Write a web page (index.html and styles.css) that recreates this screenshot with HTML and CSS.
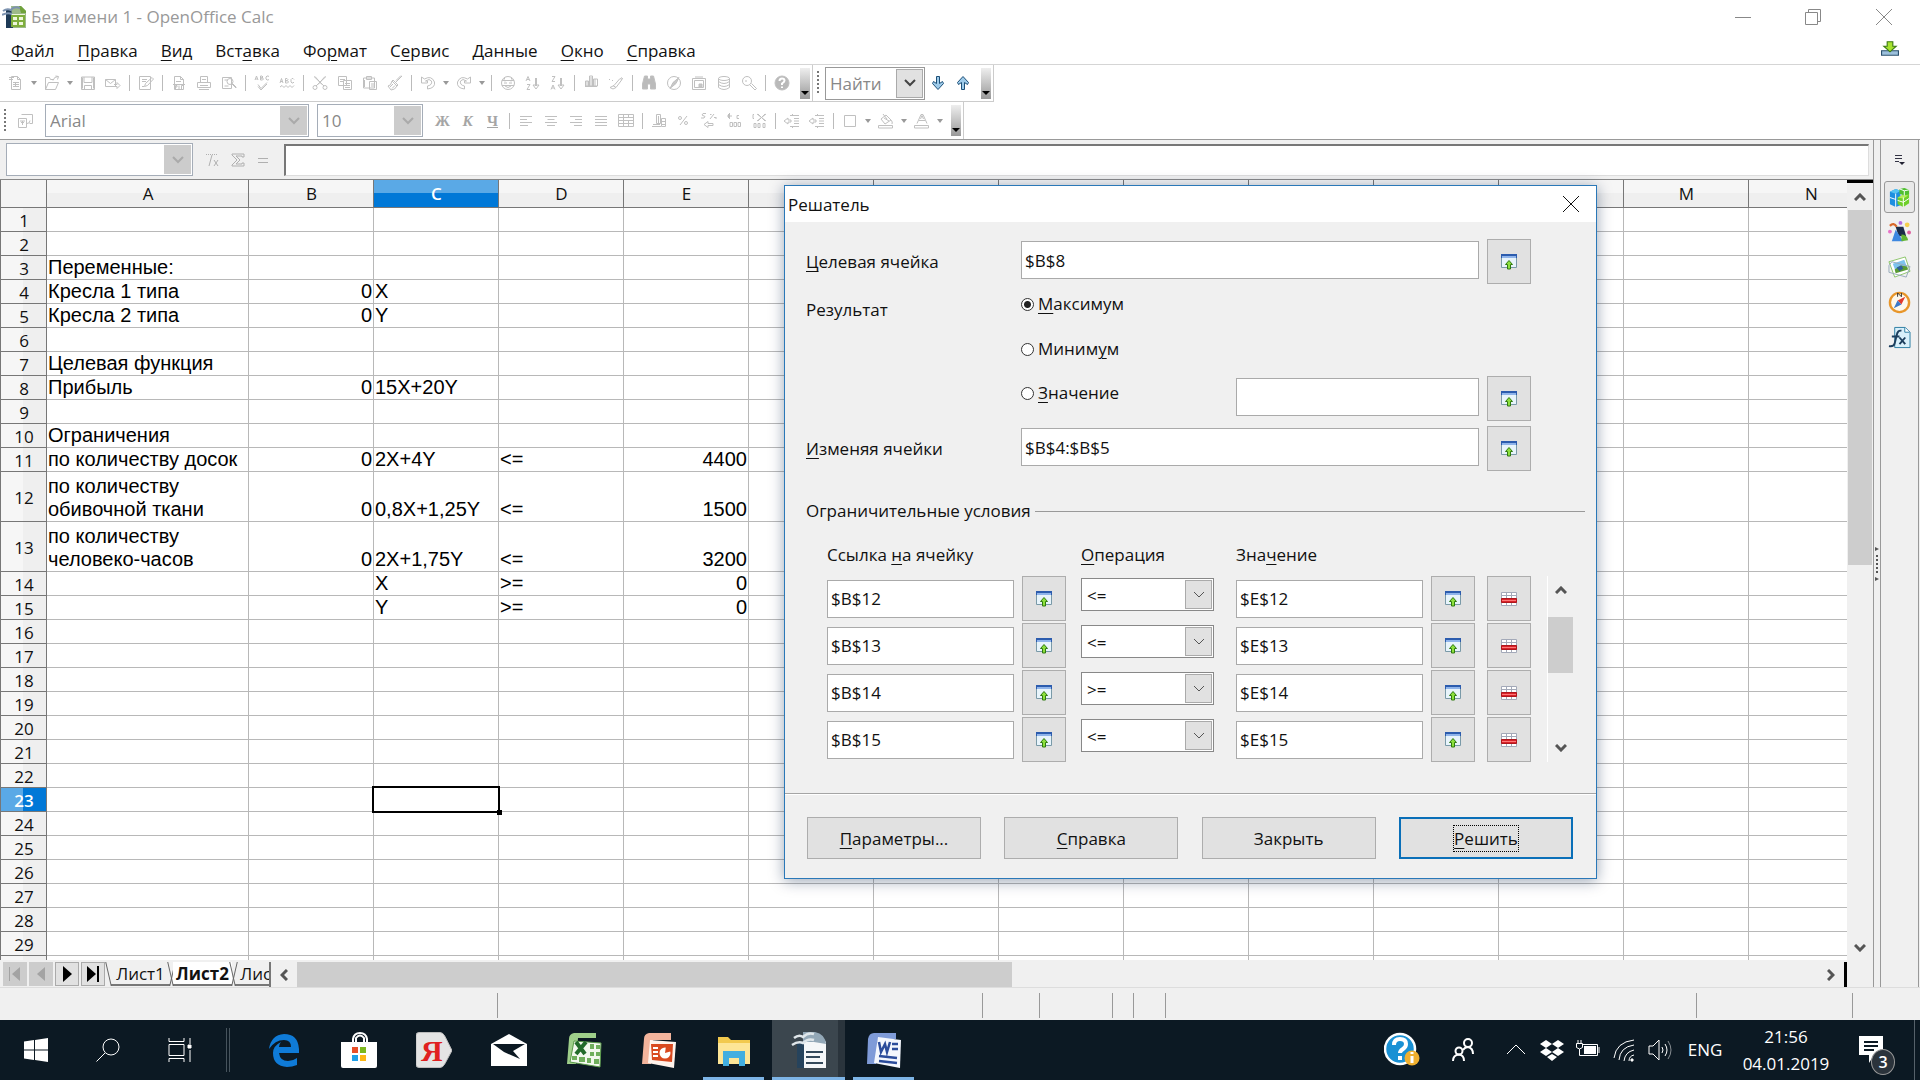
FILE: index.html
```html
<!DOCTYPE html>
<html lang="ru">
<head>
<meta charset="utf-8">
<title>Без имени 1 - OpenOffice Calc</title>
<link rel="stylesheet" href="styles.css">
</head>
<body>
<svg class="defs" aria-hidden="true">
  <symbol id="i-new" viewBox="0 0 16 16"><path d="M3.500 1.500h6l3 3v10h-9zM9.500 1.500v3h3M5 7.500h6M5 9.500h6M5 11.500h6M7.500 7v5"/><path d="M1 2.500h5M1 4.500h4"/></symbol>
  <symbol id="i-open" viewBox="0 0 16 16"><path d="M1.500 14.500v-12h4l1 2h3M1.500 14.500l3-7h10l-3 7zM9 5.500q1-4 5-4M11.500 1l3 .5-1 3"/></symbol>
  <symbol id="i-save" viewBox="0 0 16 16"><path d="M1.500 2h13v12.500h-13zM4 2v5.500h8v-5.500M4.500 14.500v-4h7v4M2.500 2.500v11M13.500 2.500v11"/></symbol>
  <symbol id="i-mail" viewBox="0 0 16 16"><path d="M.5 4.500h10v7h-10zM.5 4.500l5 4 5-4M9 9.500h3v-2l3 3-3 3v-2h-3"/></symbol>
  <symbol id="i-edit" viewBox="0 0 16 16"><path d="M1.500 1.500h11v13h-11zM4 4.500h5M4 6.500h4M6.500 11.500l1-3 6.500-6 1.500 1.500-6 6.500zM4 11.500h2"/></symbol>
  <symbol id="i-pdf" viewBox="0 0 16 16"><path d="M3.500 1.500h6l3 3v10h-9zM9.500 1.500v3h3M5 6.500h5M2 9.500h12M4.500 14v-3.500h1.500v1.500h-1.500M8 14v-3.500M10.500 14v-3.500h2"/></symbol>
  <symbol id="i-print" viewBox="0 0 16 16"><path d="M4.500 7v-5.500h7v5.500M1.500 7.500h13v5h-13zM3 14.500h10M4 10.500h8M6 4.500h4"/></symbol>
  <symbol id="i-preview" viewBox="0 0 16 16"><path d="M1.500 2.500h9v11h-9zM3.500 5h3M3.500 11h4"/><circle cx="9" cy="6.500" r="3"/><path d="M11 9l4 4M11.500 8.500l4 4"/></symbol>
  <symbol id="i-spell" viewBox="0 0 16 16"><path d="M1 5l1.500-4 1.500 4M1.500 4h2M6.500 1v4h2l1-1-1-1h-2 1.500l1-1-1-1zM15 1.500l-1-.5h-1l-1 1v2l1 1h1l1-.5M4 9.500l3 4 6-6M4 11.500l3 3.500 6-6"/></symbol>
  <symbol id="i-auto" viewBox="0 0 16 16"><path d="M1 8l1.500-4.500 1.500 4.500M1.500 6.500h2M6.500 3.500v4.500h2l1-1-1-1.300h-2 1.500l1-1-1-1.200zM15 4.500l-1-1h-1l-1 1v2.500l1 1h1l1-1M1 12l2-1.500 2 2 2-2 2 2 2-2 2 2 2-2"/></symbol>
  <symbol id="i-cut" viewBox="0 0 16 16"><path d="M2 1.500l10 9.500M14 1.500l-10 9.500M3 1.500l7 8M13 1.500l-7 8"/><circle cx="3" cy="12.500" r="2"/><circle cx="13" cy="12.500" r="2"/></symbol>
  <symbol id="i-copy" viewBox="0 0 16 16"><path d="M1.500 1.500h8v9h-8zM3 4.500h5M3 6.500h3M6.500 5.500h8v9h-8zM8 8.500h5M8 10.500h5M8 12.500h5"/></symbol>
  <symbol id="i-paste" viewBox="0 0 16 16"><path d="M1.500 3h11v10h-11zM4.500 1.500h5v3h-5zM7.500 6.500h7v8h-7zM9 9h4M9 11h4M2.500 5v7"/></symbol>
  <symbol id="i-brush" viewBox="0 0 16 16"><path d="M15 1l-6 6M14 .5l-5 5M5 6l5 5M6 5l5 5-1 1q-2 4-6 4l-3-4q3 0 4-5zM3 12l3-3M5 13.500l3-3"/></symbol>
  <symbol id="i-undo" viewBox="0 0 16 16"><path d="M1.500 2v6h6v-2h-2q4-3 6 0 1 4-4 5v3q8-1 7-7-3-7-10-3z"/></symbol>
  <symbol id="i-redo" viewBox="0 0 16 16"><path d="M14.500 2v6h-6v-2h2q-4-3-6 0-1 4 4 5v3q-8-1-7-7 3-7 10-3z"/></symbol>
  <symbol id="i-globe" viewBox="0 0 16 16"><circle cx="8" cy="8" r="6.500"/><path d="M2 5.500h12M2 10.500h12M4 8h3M9 8h3M5 2.500q-2 2 0 4M11 2.500q2 2 0 4M5 11q3 3 6 0"/></symbol>
  <symbol id="i-asc" viewBox="0 0 16 16"><path d="M1 6l2-4.500 2 4.500M2 4.500h2M2 9.500h3l-3 5h3M11.500 3v8M10.500 3v8M8 10h6l-3 4z"/></symbol>
  <symbol id="i-desc" viewBox="0 0 16 16"><path d="M2 1.500h3l-3 5h3M1 14.500l2-4.500 2 4.500M2 13h2M11.500 3v8M10.500 3v8M8 10h6l-3 4z"/></symbol>
  <symbol id="i-chart" viewBox="0 0 16 16"><path d="M2.500 11v-5h3v5zM6.500 11v-10h3v10zM10.500 11v-7h4v7zM8 2v9M4 6v5M2 11.500h12M12 4v7"/></symbol>
  <symbol id="i-draw" viewBox="0 0 16 16"><path d="M1 4l1 1M4 5l1 1M2 12.500q3 3 6 0l6-8-2-1-6 7zM5 10.500l3 2M13 2.500l2 1.500"/></symbol>
  <symbol id="i-binoc" viewBox="0 0 16 16"><path fill="#bbb" d="M3.500 1h3v3h3v-3h3l2 8v5h-5v-5h-3v5h-5v-5z"/></symbol>
  <symbol id="i-nav" viewBox="0 0 16 16"><circle cx="8" cy="8" r="6.500"/><path fill="#c8c8c8" d="M13 2.500l-3 6-6 5 3-6zM7 7l2 2"/></symbol>
  <symbol id="i-gallery" viewBox="0 0 16 16"><path d="M1.500 3.500h13v11h-13zM3.500 5.500h9v7h-9zM4 2h8"/><path fill="#c8c8c8" d="M8 9h3v3h-3z"/></symbol>
  <symbol id="i-db" viewBox="0 0 16 16"><ellipse cx="8" cy="3.500" rx="5.500" ry="2"/><path d="M2.500 3.500v9q5.500 4 11 0v-9M2.500 6.500q5.500 4 11 0M2.500 9.500q5.500 4 11 0"/></symbol>
  <symbol id="i-zoom" viewBox="0 0 16 16"><circle cx="6" cy="6" r="4.500"/><path d="M9 10l5 5 1.500-1.500-5-5M4 6h2"/></symbol>
  <symbol id="i-help" viewBox="0 0 16 16"><circle cx="8" cy="8" r="7" fill="#b9b9b9"/><path d="M5.500 6q0-2.500 2.500-2.500t2.500 2.200q0 1.300-2.500 2.800v1.500M8 11.500v1.500" style="stroke:#fff;stroke-width:2"/></symbol>
  <symbol id="i-styles" viewBox="0 0 16 16"><path d="M4.500 1.500h11v9h-3M1.500 5.500h8v9h-8zM3 8h5M5.500 8v4M4 9.500h3M10 10.500q3 0 3-3"/></symbol>
  <symbol id="i-left" viewBox="0 0 16 16"><path d="M2 3.500h12M2 6.500h7M2 9.500h12M2 12.500h8"/></symbol>
  <symbol id="i-center" viewBox="0 0 16 16"><path d="M2 3.500h12M4.500 6.500h7M2 9.500h12M4 12.500h8"/></symbol>
  <symbol id="i-right" viewBox="0 0 16 16"><path d="M2 3.500h12M7 6.500h7M2 9.500h12M6 12.500h8"/></symbol>
  <symbol id="i-just" viewBox="0 0 16 16"><path d="M2 3.500h12M2 6.500h12M2 9.500h12M2 12.500h12"/></symbol>
  <symbol id="i-merge" viewBox="0 0 16 16"><path d="M.5 1.500h15v12h-15zM.5 4.500h15M.5 7.500h15M.5 10.500h15M5.500 1.500v12M10.500 1.500v3M10.500 7.500v6"/></symbol>
  <symbol id="i-money" viewBox="0 0 16 16"><path d="M5.500 1.500h4v9h-4zM7.500 3v7M1 13.500h9M2 11.500h7M10.500 5.500h4v8h-4zM11 8.500h3M11 11.500h3"/></symbol>
  <symbol id="i-pct" viewBox="0 0 16 16"><circle cx="4" cy="5" r="1.500"/><circle cx="10" cy="10" r="1.500"/><path d="M11 3l-7 9"/></symbol>
  <symbol id="i-std" viewBox="0 0 16 16"><path d="M5 .5h-3l-1 1.500 3 1.500-1 1.500h-3M9 6l4-5M15 6v-2M9 1.500h1.500M13 4.500h2M3 11.500l4-3v2h5v2h-5v2z"/></symbol>
  <symbol id="i-dec" viewBox="0 0 16 16"><path d="M3.500 0v6M1 3h5M2.500 1v4M13 2.500h-2v3h2M4 9.500h2.500v4h-2.500zM8 9.500h2.500v4h-2.500zM12 9.500h2.500v4h-2.500z"/></symbol>
  <symbol id="i-del" viewBox="0 0 16 16"><path d="M3 1.500h-1v4h1M6 1l9 7M15 1l-9 7M7 1l7 7M14 1l-7 7M3 10.500h2v4h-2zM7 10.500h2v4h-2zM12 10.500h2v4h-2z"/></symbol>
  <symbol id="i-outdent" viewBox="0 0 16 16"><path d="M6 2.500h9M10 5.500h5M10 8h5M10 10.500h5M6 13.500h9M0 8l4-3v2h3v2h-3v2zM8.500 1v2M8.500 13v2"/></symbol>
  <symbol id="i-border" viewBox="0 0 16 16"><path d="M2.500 2.500h11v11h-11z"/></symbol>
  <symbol id="i-fill" viewBox="0 0 16 16"><path d="M3 6l5-4 5 5-6 4zM5 1l4 5M13 7q2 2 1 4M.5 12.500h14v2.500h-14zM6 5l5 3"/></symbol>
  <symbol id="i-color" viewBox="0 0 16 16"><path d="M3 10.500l4-9h2l4 9M5 7.500h6M6.500 6l1.500-3.500 1.500 3.500M.5 12.500h14v2.500h-14z"/></symbol>
  <symbol id="i-fx" viewBox="0 0 16 16"><path stroke-dasharray="1 1" d="M1 2.500h12"/><path d="M4 14l3-11M9 8l4 6M13 8l-4 6"/></symbol>
  <symbol id="i-sum" viewBox="0 0 16 16"><path d="M2 2h12v3h-2v-1h-6l4 4-4 4h6v-1h2v3h-12v-1l5-5-5-5z"/></symbol>
  <symbol id="i-eq" viewBox="0 0 16 16"><path d="M3 6.500h10M3 10.500h10"/></symbol>
  <symbol id="i-shrink" viewBox="0 0 16 16"><path fill="#e8f4fb" stroke="#7a9aa8" d="M.5 .5h15v13h-15z"/><path fill="#2c5cae" d="M0 0h16v4h-16z"/><path fill="#8fb4ea" d="M1 2h14v2h-14z"/><path fill="#8ce03c" stroke="#2f7a10" d="M8 6.500l3.500 4h-2v4.500h-3v-4.500h-2z"/></symbol>
  <symbol id="i-delrow" viewBox="0 0 16 16"><path fill="#fff" stroke="#a3a9b8" d="M.5 1.500h15v13h-15zM.5 4.500h15M5.500 1.500v13M10.500 1.500v13"/><path fill="#d8232a" stroke="#b0161c" d="M.5 7.500h15v4h-15z"/><path stroke="#f77" d="M1 9.500h14"/></symbol>
  <symbol id="i-chev" viewBox="0 0 12 8"><path d="M1 1l5 5 5-5"/></symbol>
</svg>

<header class="titlebar">
  <svg class="app-logo" viewBox="0 0 24 24"><path fill="#1e3a56" d="M4 5h9v18h-9z"/><path fill="#9db98a" d="M9 1h10l5 5v17h-13z"/><path fill="#6fa23a" d="M17 1h2l5 5v2h-5z"/><path fill="#eef6dc" d="M9 9h14v13h-14z"/><path fill="none" stroke="#7fae3c" stroke-width="2" d="M10 11h12v10h-12zM10 16h12M16 11v10"/><path fill="none" stroke="#7d93b0" stroke-width="2" d="M1 6q4-3 8-1 3-4 9-2M0 10q5-3 10-1"/></svg>
  <span class="doc-title">Без имени 1 - OpenOffice Calc</span>
  <div class="win-controls">
    <button aria-label="Свернуть"><svg viewBox="0 0 16 16"><path d="M0 8.500h16"/></svg></button>
    <button aria-label="Развернуть"><svg viewBox="0 0 16 16"><path d="M.5 3.500h12v12h-12zM3.500 3.500v-3h12v12h-3"/></svg></button>
    <button aria-label="Закрыть"><svg viewBox="0 0 16 16"><path d="M0 0l16 16M16 0l-16 16"/></svg></button>
  </div>
</header>

<nav class="menubar">
  <a href="#"><u>Ф</u>айл</a><a href="#"><u>П</u>равка</a><a href="#"><u>В</u>ид</a><a href="#">Вст<u>а</u>вка</a><a href="#">Фо<u>р</u>мат</a><a href="#">С<u>е</u>рвис</a><a href="#"><u>Д</u>анные</a><a href="#"><u>О</u>кно</a><a href="#"><u>С</u>правка</a>
  <button class="update" aria-label="Обновление"><svg viewBox="0 0 16 14"><path fill="#9cc0dc" stroke="#2b506e" d="M.5 8.500h15v4h-15z"/><path fill="#a6e22e" stroke="#3c7a12" d="M5.500 .5h5v4h3l-5.500 5-5.500-5h3z"/></svg></button>
</nav>

<div class="toolbar-row">
  <div class="toolbar">
    <button class="tb"><svg><use href="#i-new"/></svg></button><button class="dd"></button>
    <button class="tb"><svg><use href="#i-open"/></svg></button><button class="dd"></button>
    <button class="tb"><svg><use href="#i-save"/></svg></button>
    <button class="tb"><svg><use href="#i-mail"/></svg></button><i class="sep"></i>
    <button class="tb"><svg><use href="#i-edit"/></svg></button><i class="sep"></i>
    <button class="tb"><svg><use href="#i-pdf"/></svg></button>
    <button class="tb"><svg><use href="#i-print"/></svg></button>
    <button class="tb"><svg><use href="#i-preview"/></svg></button><i class="sep"></i>
    <button class="tb"><svg><use href="#i-spell"/></svg></button>
    <button class="tb"><svg><use href="#i-auto"/></svg></button><i class="sep"></i>
    <button class="tb"><svg><use href="#i-cut"/></svg></button>
    <button class="tb"><svg><use href="#i-copy"/></svg></button>
    <button class="tb"><svg><use href="#i-paste"/></svg></button>
    <button class="tb"><svg><use href="#i-brush"/></svg></button><i class="sep"></i>
    <button class="tb"><svg><use href="#i-undo"/></svg></button><button class="dd"></button>
    <button class="tb"><svg><use href="#i-redo"/></svg></button><button class="dd"></button><i class="sep"></i>
    <button class="tb"><svg><use href="#i-globe"/></svg></button>
    <button class="tb"><svg><use href="#i-asc"/></svg></button>
    <button class="tb"><svg><use href="#i-desc"/></svg></button><i class="sep"></i>
    <button class="tb"><svg><use href="#i-chart"/></svg></button>
    <button class="tb"><svg><use href="#i-draw"/></svg></button><i class="sep"></i>
    <button class="tb"><svg><use href="#i-binoc"/></svg></button>
    <button class="tb"><svg><use href="#i-nav"/></svg></button>
    <button class="tb"><svg><use href="#i-gallery"/></svg></button>
    <button class="tb"><svg><use href="#i-db"/></svg></button>
    <button class="tb"><svg><use href="#i-zoom"/></svg></button><i class="sep"></i>
    <button class="tb"><svg><use href="#i-help"/></svg></button>
    <button class="more"></button>
  </div>
  <div class="toolbar">
    <i class="grip"></i>
    <div class="combo find"><input aria-label="Найти" value="Найти"><button aria-label="Список"><svg><use href="#i-chev"/></svg></button></div>
    <button class="tb step"><svg viewBox="0 0 16 16"><path d="M6.500 1.500h3v7l3-2 1 2-5.500 6-5.500-6 1-2 3 2z"/></svg></button>
    <button class="tb step"><svg viewBox="0 0 16 16"><path d="M6.500 14.500h3v-7l3 2 1-2-5.500-6-5.500 6 1 2 3-2z"/></svg></button>
    <button class="more"></button>
  </div>
</div>

<div class="toolbar-row format-row">
  <div class="toolbar">
    <i class="grip"></i>
    <button class="tb style-btn"><svg><use href="#i-styles"/></svg></button>
    <div class="combo font"><input aria-label="Шрифт" value="Arial"><button aria-label="Список"><svg><use href="#i-chev"/></svg></button></div>
    <div class="combo size"><input aria-label="Кегль" value="10"><button aria-label="Список"><svg><use href="#i-chev"/></svg></button></div>
    <button class="tb letter">Ж</button><button class="tb letter ital">К</button><button class="tb letter und">Ч</button><i class="sep"></i>
    <button class="tb"><svg><use href="#i-left"/></svg></button>
    <button class="tb"><svg><use href="#i-center"/></svg></button>
    <button class="tb"><svg><use href="#i-right"/></svg></button>
    <button class="tb"><svg><use href="#i-just"/></svg></button>
    <button class="tb"><svg><use href="#i-merge"/></svg></button><i class="sep"></i>
    <button class="tb"><svg><use href="#i-money"/></svg></button>
    <button class="tb"><svg><use href="#i-pct"/></svg></button>
    <button class="tb"><svg><use href="#i-std"/></svg></button>
    <button class="tb"><svg><use href="#i-dec"/></svg></button>
    <button class="tb"><svg><use href="#i-del"/></svg></button><i class="sep"></i>
    <button class="tb"><svg><use href="#i-outdent"/></svg></button>
    <button class="tb"><svg><use href="#i-outdent"/></svg></button><i class="sep"></i>
    <button class="tb"><svg><use href="#i-border"/></svg></button><button class="dd"></button>
    <button class="tb"><svg><use href="#i-fill"/></svg></button><button class="dd"></button>
    <button class="tb"><svg><use href="#i-color"/></svg></button><button class="dd"></button>
    <button class="more"></button>
  </div>
</div>

<main class="workspace">
  <section class="calc">
    <div class="formula-bar">
      <div class="combo name-box"><input aria-label="Имя ячейки"><button aria-label="Список"><svg><use href="#i-chev"/></svg></button></div>
      <div class="formula-tools">
        <button class="tb"><svg><use href="#i-fx"/></svg></button>
        <button class="tb"><svg><use href="#i-sum"/></svg></button>
        <button class="tb"><svg><use href="#i-eq"/></svg></button>
      </div>
      <input class="formula" aria-label="Строка ввода">
    </div>
    <div class="sheet-area">
      <div class="sheet-col">
        <div class="sheet"><table id="grid"></table></div>
        <div class="bottom-bar">
          <div class="nav-btns">
            <button disabled aria-label="Первый лист"><svg viewBox="0 0 14 16"><path d="M12 1v14l-8-7zM1 1h1v14h-1z"/></svg></button>
            <button disabled aria-label="Предыдущий лист"><svg viewBox="0 0 14 16"><path d="M11 1v14l-8-7z"/></svg></button>
            <button aria-label="Следующий лист"><svg viewBox="0 0 14 16"><path d="M3 0v16l9-8z"/></svg></button>
            <button aria-label="Последний лист"><svg viewBox="0 0 14 16"><path d="M1 0v16l9-8zM11 0h2v16h-2z"/></svg></button>
          </div>
          <div class="tabs"><button class="tab">Лист1</button><button class="tab active">Лист2</button><button class="tab">Лист3</button></div>
          <div class="hscroll">
            <button aria-label="Влево"><svg class="rot-l"><use href="#i-chev"/></svg></button>
            <div class="track"><div class="thumb"></div></div>
            <button aria-label="Вправо"><svg class="rot-r"><use href="#i-chev"/></svg></button>
          </div>
        </div>
      </div>
      <div class="vscroll">
        <button aria-label="Вверх"><svg class="rot-u"><use href="#i-chev"/></svg></button>
        <div class="track"><div class="thumb"></div></div>
        <button aria-label="Вниз"><svg><use href="#i-chev"/></svg></button>
      </div>
    </div>
  </section>
  <div class="splitter"><svg viewBox="0 0 4 34"><path d="M0 0l4 2-4 2zM1 8h2v2h-2zM1 12h2v2h-2zM1 16h2v2h-2zM1 20h2v2h-2zM1 24h2v2h-2zM0 30l4 2-4 2z"/></svg></div>
  <aside class="sidebar">
    <button class="side-menu" aria-label="Меню"><svg viewBox="0 0 12 12"><path stroke="#334" d="M1 1.500h7M1 4.500h7M1 7.500h4"/><path fill="#223" d="M5 8h6l-3 3z"/></svg></button>
    <button class="on" aria-label="Свойства"><svg viewBox="0 0 24 24"><path fill="#1d8fe0" d="M2 6l6-3 5 2v15l-5 2-6-3z"/><path fill="#57c3f2" d="M2 6l6-3 5 2-5 3z"/><path fill="#6fcf2a" d="M10 12l6-3 6-2v11l-6 4-6-3z"/><path fill="#b7ee5a" d="M10 12l6-3 5 1-5 3z"/><path fill="#4fbf2f" d="M12 3l5-1 5 2v4l-5 2-5-2z"/><path fill="none" stroke="#fff" d="M2 12l6 2M8 8v14M10 15l6 2 6-4M16 12v10M12 3l5 2 5-1M17 5v5"/></svg></button>
    <button aria-label="Стили"><svg viewBox="0 0 24 24"><path fill="#1b2c48" d="M8 6l8 0 3 10-8 0z"/><path fill="#3d87e0" d="M8 9l-4 12 12 0z"/><path fill="#62b531" d="M14 14q6 0 7 6l-7 1z"/><path fill="none" stroke="#d9682a" stroke-width="2.500" d="M2 5q4-4 7 1"/><circle cx="13" cy="2" r="2" fill="#b36be0"/><circle cx="20" cy="4" r="2.500" fill="#f3cf4f"/><circle cx="2" cy="11" r="2" fill="#e873c8"/><circle cx="22" cy="12" r="2" fill="#e05f9f"/></svg></button>
    <button aria-label="Галерея"><svg viewBox="0 0 24 24"><path fill="#fff" stroke="#8cc46a" d="M1 6l17-5 5 15-16 6z"/><path fill="#7cc3ee" d="M5 8l12-4 3 8-12 4z"/><path fill="#5a9c34" d="M7 14l6-4 7 1 1 3-13 4z"/><path fill="#2f5f9a" d="M9 12l5-2 2 3-4 3z"/><path fill="none" stroke="#9ab" d="M1 10l3-4 19 5-4 11-18-5z"/></svg></button>
    <button aria-label="Навигатор"><svg viewBox="0 0 24 24"><circle cx="12" cy="12" r="10" fill="#fdf8ec" stroke="#e8962a" stroke-width="2.500"/><path fill="#e03a2e" d="M18 6l-4 8-4-4z"/><path fill="#3a78c8" d="M6 18l4-8 4 4z"/><path fill="none" stroke="#333" d="M10 6v-4l4 4v-4"/></svg></button>
    <button aria-label="Функции"><svg viewBox="0 0 24 24"><path fill="#d8f0fb" stroke="#2c7da3" d="M7 1.500h11l5 5v16h-16z"/><path fill="#fff" stroke="#2c7da3" d="M17.500 1.500v5h5"/><path fill="none" stroke="#1d3f5e" stroke-width="2" d="M14 5q-4-1-5 5l-2 8q-1 4-6 3M4 11h8M12 12l6 7M18 12l-6 7"/></svg></button>
  </aside>
</main>

<footer class="status"><span></span><span></span><span></span><span></span><span></span><span></span><span></span><span></span></footer>

<section class="dialog" role="dialog" aria-labelledby="dlg-title">
  <div class="dlg-head"><h1 id="dlg-title">Решатель</h1><button aria-label="Закрыть окно"><svg viewBox="0 0 16 16"><path d="M0 0l16 16M16 0l-16 16"/></svg></button></div>
  <form class="dlg-body">
    <div class="params">
      <label for="target"><u>Ц</u>елевая ячейка</label><input class="wide" id="target" value="$B$8"><button type="button" class="pick" aria-label="Сжать"><svg><use href="#i-shrink"/></svg></button>
      <span class="result">Результат</span><label class="radio"><input type="radio" name="r" checked><span><u>М</u>аксимум</span></label>
      <label class="radio"><input type="radio" name="r"><span>Миним<u>у</u>м</span></label>
      <label class="radio"><input type="radio" name="r"><span><u>З</u>начение</span></label><input aria-label="Значение результата"><button type="button" class="pick" aria-label="Сжать"><svg><use href="#i-shrink"/></svg></button>
      <label for="vars"><u>И</u>зменяя ячейки</label><input class="wide" id="vars" value="$B$4:$B$5"><button type="button" class="pick" aria-label="Сжать"><svg><use href="#i-shrink"/></svg></button>
    </div>
    <fieldset>
      <legend>Ограничительные условия</legend>
      <div class="cond-head"><span>Ссылка <u>н</u>а ячейку</span><span><u>О</u>перация</span><span>Зна<u>ч</u>ение</span></div>
      <div class="conds">
        <div class="cond-rows" id="conds"></div>
        <div class="cond-scroll">
          <button type="button" aria-label="Вверх"><svg class="rot-u"><use href="#i-chev"/></svg></button>
          <div class="track"><div class="thumb"></div></div>
          <button type="button" aria-label="Вниз"><svg><use href="#i-chev"/></svg></button>
        </div>
      </div>
    </fieldset>
    <div class="actions">
      <button type="button"><span><u>П</u>араметры...</span></button><button type="button"><span><u>С</u>правка</span></button><button type="button"><span>Закрыть</span></button><button type="button" class="default"><span><u>Р</u>ешить</span></button>
    </div>
  </form>
</section>

<footer class="taskbar">
  <button class="sys" aria-label="Пуск"><svg viewBox="0 0 24 24"><path fill="#fff" d="M0 3.500l10-1.500v9.500h-10zM11 2l13-2v11.500h-13zM0 12.500h10v9.500l-10-1.500zM11 12.500h13v11.500l-13-2z"/></svg></button>
  <button class="sys" aria-label="Поиск"><svg viewBox="0 0 24 24"><circle cx="15" cy="9" r="8"/><path d="M9 15l-8.500 8.500"/></svg></button>
  <button class="sys" aria-label="Представление задач"><svg viewBox="0 0 24 24"><path d="M1 6.500h15v11h-15zM1 0v3.500h15v-3.500M1 24v-3.500h15v3.500M22 0v6M22 12v12"/><path fill="#fff" d="M20 7h3v3h-3z"/></svg></button>
  <i class="tsep"></i>
  <div class="apps">
    <button aria-label="Edge"><svg viewBox="0 0 36 36"><path fill="#0f7bd8" d="M3 17q2-14 15-15 14 0 15 15v4h-20q1 8 9 8 5 0 9-3v7q-5 2-10 2-14-1-14-14 0-7 8-11-2 2-2 5h12q0-7-7-7-9 0-15 9z"/></svg></button>
    <button aria-label="Магазин"><svg viewBox="0 0 36 36"><path fill="#fff" d="M0 10h36v24q0 2-2 2h-32q-2 0-2-2z"/><path fill="none" stroke="#fff" stroke-width="2" d="M12 10v-3q1-6 7-6t7 6v3M15 10v-4q4-5 8 0v4"/><path fill="#e8502a" d="M11 15h6v6h-6z"/><path fill="#7cb81e" d="M19 15h6v6h-6z"/><path fill="#1f9fe8" d="M11 23h6v6h-6z"/><path fill="#fcb716" d="M19 23h6v6h-6z"/></svg></button>
    <button aria-label="Яндекс"><svg viewBox="0 0 36 36"><path fill="#e4e4e4" stroke="#bbb" d="M3 .5h21q3 0 5 4l7 14-7 13q-2 4-5 4h-21q-3 0-3-3v-29q0-3 3-3z"/><text x="5" y="29" class="ya">Я</text></svg></button>
    <button aria-label="Почта"><svg viewBox="0 0 36 36"><path fill="#fff" d="M0 12l18-10 18 10v22h-36z"/><path fill="#0c1923" d="M2 12h32l-12 7 7 8-16-7z"/></svg></button>
    <button aria-label="Excel"><svg viewBox="0 0 36 36"><path fill="#9fcf8a" d="M8 1h22v5h-18l-2 26h-9l2-25q0-5 5-6z"/><path fill="#f2f8ee" stroke="#5a9a4a" d="M8 9l27 2-1 24-30-5z"/><path fill="#6fae5c" d="M24 12h4v5h-4zM30 13h4v4h-4zM24 20h4v4h-4zM30 20h4v4h-4zM21 26h4v5h-4zM28 27h5v5h-5zM6 24h5v4h-5zM13 25h6v5h-6z"/><path fill="none" stroke="#226b2a" stroke-width="4" d="M10 10l9 12M20 10l-10 12"/></svg></button>
    <button aria-label="PowerPoint"><svg viewBox="0 0 36 36"><path fill="#f3b49c" d="M8 1h22v7h-18l-2 24h-9l2-25q0-5 5-6z"/><path fill="#fff3ec" d="M9 8l26 2-2 26-26-5z"/><path fill="#d9491f" d="M10 12h22l-1 18-20-2z"/><path fill="none" stroke="#fff" stroke-width="2" d="M12 16h5M12 20h5M12 24h5"/><circle cx="24" cy="21" r="5.500" fill="#fff"/><path fill="#d9491f" d="M24 21l1-7 6 5z"/></svg></button>
    <button class="run" aria-label="Проводник"><svg viewBox="0 0 36 36"><path fill="#f2c94e" d="M2 5h10l3 3h19v24h-32z"/><path fill="#fde596" d="M2 11h32v21h-32z"/><path fill="#42aee0" d="M7 19h22v15h-6v-8h-10v8h-6z"/></svg></button>
    <button class="run current" aria-label="OpenOffice"><svg viewBox="0 0 36 36"><path fill="#26435c" d="M6 10h10v26h-10z"/><path fill="#f5f7f8" d="M13 4h16l6 6v26h-22z"/><path fill="#93a8b7" d="M12 0h12q10 2 11 12l-12-2h-11z"/><path fill="none" stroke="#dfe6ea" stroke-width="2.500" d="M3 6q5-4 9-1 5-5 11-3M1 13q6-4 11-2 5-5 11-3"/><path stroke="#34495a" stroke-width="2" d="M15 20h17M15 25h14M15 31h17"/></svg></button>
    <button class="run" aria-label="Word"><svg viewBox="0 0 36 36"><path fill="#7f9bd8" d="M8 1h22v6h-18l-2 25h-9l1-25q1-6 6-6z"/><path fill="#f4f7fd" d="M12 5l23 3-1 28-26-5z"/><path fill="none" stroke="#2b4c9b" stroke-width="2.500" d="M13 10l2 10 4-8 2 8 3-10M26 12h6M26 17h6M13 24l18 2M13 29l18 2"/></svg></button>
  </div>
  <div class="tray">
    <button class="help-ic" aria-label="Справка"><svg viewBox="0 0 36 36"><circle cx="16" cy="17" r="15" fill="#1a91d4" stroke="#fff" stroke-width="2.500"/><path fill="none" stroke="#fff" stroke-width="4" d="M10 13q0-6 6-6t6 5q0 3-3 5t-3 4M16 24v4"/><circle cx="28" cy="26" r="7.500" fill="#f0b030"/><path stroke="#fff" stroke-width="3" d="M28 20v2M28 24v7"/></svg></button>
    <button class="people" aria-label="Люди"><svg viewBox="0 0 24 24"><circle cx="8" cy="13" r="3.500"/><path d="M2 23q0-6 6-6.500 5 .5 5 6.500"/><circle cx="17" cy="5" r="4"/><path d="M12 12q2-3 5-3 5 1 5 7"/></svg></button>
    <button aria-label="Показать скрытые"><svg viewBox="0 0 24 24"><path d="M3 16l9-9 9 9"/></svg></button>
    <button aria-label="Dropbox"><svg viewBox="0 0 24 24"><path fill="#fff" stroke="none" d="M6 2l6 4-6 4-6-4zM18 2l6 4-6 4-6-4zM6 10l6 4-6 4-6-4zM18 10l6 4-6 4-6-4zM12 16l5 3-5 4-5-4z"/></svg></button>
    <button aria-label="Батарея"><svg viewBox="0 0 24 24"><path d="M6 6.500h15.500v11h-14.500M2 2v4M5 2v4M.5 5.500h6v4q-3 3-6 0zM3.500 11v6.500h4M23 9v6"/><path fill="#fff" stroke="none" d="M8 8h12v8h-12z"/></svg></button>
    <button aria-label="Сеть"><svg viewBox="0 0 24 24"><path d="M2 20q2-16 20-18M7 22q1-13 15-15M12 23q1-9 10-11M17 23q0-5 5-6"/><path fill="#fff" d="M19 21h2v2h-2z"/></svg></button>
    <button aria-label="Звук"><svg viewBox="0 0 24 24"><path d="M1 8h4l6-6v20l-6-6h-4zM14 9q2 3 0 6M17 6q4 6 0 12"/><path opacity=".5" d="M20 3q6 9 0 18"/></svg></button>
    <span class="lang">ENG</span>
    <time class="clock"><span>21:56</span><span>04.01.2019</span></time>
    <button class="notif" aria-label="Уведомления"><svg viewBox="0 0 24 28"><path fill="#fff" stroke="none" d="M0 0h24v19h-9l-5 8v-8h-10z"/><path stroke="#0c1923" stroke-width="2" d="M5 6h14M5 10h14M5 14h10"/></svg><b>3</b></button>
  </div>
</footer>
<script src="app.js"></script>
</body>
</html>
```
FILE: app.js
```js
const columns = ['A', 'B', 'C', 'D', 'E', 'F', 'G', 'H', 'I', 'J', 'K', 'L', 'M', 'N'];
const labelledRows = 29;
const selected = { col: 'C', row: 23 };

const cells = {
  A3: 'Переменные:',
  A4: 'Кресла 1 типа', B4: 0, C4: 'X',
  A5: 'Кресла 2 типа', B5: 0, C5: 'Y',
  A7: 'Целевая функция',
  A8: 'Прибыль', B8: 0, C8: '15X+20Y',
  A10: 'Ограничения',
  A11: 'по количеству досок', B11: 0, C11: '2X+4Y', D11: '<=', E11: 4400,
  A12: 'по количеству обивочной ткани', B12: 0, C12: '0,8X+1,25Y', D12: '<=', E12: 1500,
  A13: 'по количеству человеко-часов', B13: 0, C13: '2X+1,75Y', D13: '<=', E13: 3200,
  C14: 'X', D14: '>=', E14: 0,
  C15: 'Y', D15: '>=', E15: 0
};

const make = (tag, className, text) => {
  const node = document.createElement(tag);
  if (className) node.className = className;
  if (text !== undefined) node.textContent = text;
  return node;
};

const grid = document.getElementById('grid');
const head = make('tr');
head.append(make('th', 'corner'));
columns.forEach(c => head.append(make('th', 'col' + (c === 'A' ? ' first' : '') + (c === selected.col ? ' sel' : ''), c)));
grid.append(head);

for (let r = 1; r <= labelledRows + 1; r++) {
  const tr = make('tr', r === 12 || r === 13 ? 'tall' : '');
  tr.append(make('th', 'row' + (r === selected.row ? ' sel' : ''), r > labelledRows ? '' : r));
  columns.forEach(c => {
    const value = cells[c + r];
    const td = make('td', typeof value === 'number' ? 'num' : '', value);
    if (c === selected.col && r === selected.row) td.classList.add('cursor');
    tr.append(td);
  });
  grid.append(tr);
}

const icon = name => `<svg><use href="#i-${name}"/></svg>`;
document.getElementById('conds').innerHTML = [
  [12, '<='], [13, '<='], [14, '>='], [15, '<=']
].map(([n, op]) => `
  <div class="cond">
    <input aria-label="Ссылка на ячейку" value="$B$${n}">
    <button type="button" class="pick" aria-label="Сжать">${icon('shrink')}</button>
    <div class="select"><select aria-label="Операция"><option>${op.replace('<', '&lt;')}</option></select><i><svg><use href="#i-chev"/></svg></i></div>
    <input aria-label="Значение" value="$E$${n}">
    <button type="button" class="pick" aria-label="Сжать">${icon('shrink')}</button>
    <button type="button" class="pick remove" aria-label="Удалить">${icon('delrow')}</button>
  </div>`).join('');
```
FILE: styles.css
```css
* { box-sizing: border-box; }
body { margin: 0; height: 100vh; display: flex; flex-direction: column; overflow: hidden; background: #fff; color: #111; font: 17px/24px "Open Sans", "Noto Sans", sans-serif; }
button, input, select { font: inherit; color: inherit; margin: 0; padding: 0; border: 0; background: none; border-radius: 0; outline: 0; min-width: 0; }
svg { display: block; fill: none; }
u { text-decoration-thickness: 1px; text-underline-offset: 3px; }
.defs { position: absolute; width: 0; height: 0; }

.titlebar { display: flex; align-items: center; height: 34px; padding: 0 12px 0 2px; color: #999; }
.app-logo { width: 24px; height: 24px; margin-right: 5px; }
.doc-title { flex: 1; }
.win-controls { display: flex; }
.win-controls button { width: 70px; height: 34px; display: grid; place-items: center; }
.win-controls button:last-child { width: 48px; margin-left: 12px; }
.win-controls svg { width: 16px; height: 16px; stroke: #888; }

.menubar { display: flex; align-items: center; gap: 23px; height: 31px; padding: 3px 21px 0 11px; border-bottom: 1px solid #d5d5d5; }
.menubar a { color: #111; text-decoration: none; }
.update { margin-left: auto; padding-bottom: 4px; }
.update svg { width: 18px; height: 16px; }

.toolbar-row { display: flex; height: 37px; }
.toolbar { display: flex; align-items: center; padding-left: 3px; border-right: 1px solid #ccc; border-bottom: 1px solid #ccc; }
.format-row { border-bottom: 1px solid #999; height: 38px; }
.format-row .toolbar { border-bottom: 0; }
.tb { width: 25px; height: 28px; display: grid; place-items: center; flex: none; }
.tb svg { width: 16px; height: 16px; stroke: #c0c0c0; }
.step svg { fill: #9ecbea; stroke: #1d5078; }
.letter { font: bold 15px/28px "Liberation Serif", serif; color: #a5a5a5; }
.ital { font-style: italic; }
.und { text-decoration: underline; }
.dd { width: 11px; height: 28px; flex: none; display: grid; place-items: center; }
.dd::before { content: ""; border: 3px solid transparent; border-top: 4px solid #999; border-bottom: 0; }
.sep { width: 8px; height: 16px; flex: none; background: linear-gradient(#bbb, #bbb) center / 1px 100% no-repeat; }
.grip { width: 3px; height: 24px; margin-right: 6px; background: repeating-linear-gradient(#777 0 2px, transparent 2px 4px) center / 2px 100% no-repeat; }
.more { width: 10px; height: 31px; margin: 0 2px 0 6px; background: linear-gradient(#eee, #999); display: flex; align-items: flex-end; justify-content: center; padding-bottom: 4px; }
.more::before { content: ""; border: 4px solid transparent; border-top: 4px solid #000; border-bottom: 0; }
.combo { display: flex; height: 33px; border: 1px solid #a5adb8; background: #fff; color: #888; flex: none; padding: 1px; }
.combo input { flex: 1; padding: 1px 0 0 3px; }
.combo button { width: 27px; background: #ccc; display: grid; place-items: center; }
.combo svg { width: 12px; height: 8px; stroke: #aaa; stroke-width: 2; }
.find { width: 100px; border-color: #999; }
.find button { background: #e1e1e1; border: 1px solid #aaa; }
.find svg { stroke: #444; }
.style-btn { margin-right: 8px; }
.font { width: 264px; margin-right: 8px; }
.size { width: 106px; margin-right: 7px; }
.name-box { width: 187px; }

.workspace { flex: 1; min-height: 0; display: flex; background: #f0f0f0; }
.calc { flex: 1; min-width: 0; display: flex; flex-direction: column; border-right: 1px solid #999; }
.formula-bar { display: flex; align-items: center; height: 40px; padding: 0 4px 0 6px; border-bottom: 1px solid #888; flex: none; }
.formula-tools { display: flex; padding: 0 9px 0 7px; }
.formula-tools .tb svg { stroke: #b0b0b0; }
.formula { flex: 1; height: 32px; background: #fff; border: 1px solid #ddd; border-top: 2px solid #777; border-left: 2px solid #777; }
.sheet-area { flex: 1; min-height: 0; display: flex; }
.sheet-col { flex: 1; min-width: 0; display: flex; flex-direction: column; }
.sheet { flex: 1; min-height: 0; overflow: hidden; background: #fff; }

table { table-layout: fixed; width: 0; border-spacing: 0; }
th { font-weight: 400; padding: 0; border-right: 1px solid #777; border-bottom: 1px solid #777; }
.corner { width: 47px; height: 28px; background: #f4f4f4; border-left: 1px solid #777; }
.col { width: 125px; padding: 1px 0 0 1px; background: linear-gradient(#f6f6f6 50%, #efefef 50%); }
.first { width: 202px; }
.row { border-left: 1px solid #777; background: linear-gradient(90deg, #f6f6f6 50%, #efefef 50%); line-height: 20px; padding: 3px 0 0 1px; }
.col.sel { background: linear-gradient(#5aa9e6 50%, #0078d7 50%); color: #fff; font-weight: 600; }
.row.sel { background: linear-gradient(90deg, #5aa9e6 50%, #0078d7 50%); color: #fff; font-weight: 600; }
td { height: 24px; padding: 0 1px; border-right: 1px solid #b8b8b8; border-bottom: 1px solid #b8b8b8; vertical-align: bottom; font: 20px/23px "Liberation Sans", sans-serif; color: #000; }
.tall td { height: 50px; }
.num { text-align: right; }
.cursor { position: relative; }
.cursor::before { content: ""; position: absolute; inset: -2px; border: 2px solid #000; }
.cursor::after { content: ""; position: absolute; right: -4px; bottom: -4px; width: 5px; height: 5px; background: #000; }

.bottom-bar { display: flex; height: 27px; padding: 2px 0 0; flex: none; }
.nav-btns { display: flex; gap: 2px; padding-left: 3px; flex: none; }
.nav-btns button { width: 24px; height: 24px; border: 1px solid #aaa; background: #e1e1e1; display: grid; place-items: center; }
.nav-btns svg { width: 14px; height: 16px; fill: #000; }
.nav-btns button:disabled { background: #ccc; border-color: #ccc; }
.nav-btns button:disabled svg { fill: #a3a3a3; }
.tabs { display: flex; width: 166px; padding-left: 3px; overflow: hidden; border-right: 2px solid #777; flex: none; }
.tab { position: relative; width: 59px; height: 24px; margin-left: 3px; border-bottom: 2px solid #777; white-space: nowrap; flex: none; }
.tab::before, .tab::after { content: ""; position: absolute; top: 0; width: 1px; height: 24px; background: #666; }
.tab::before { left: -3px; transform: skewX(13deg); }
.tab::after { right: -3px; transform: skewX(-13deg); }
.tab.active { background: #fff; font-weight: 700; }
.hscroll, .hscroll .track { display: flex; flex: 1; }
.hscroll { border-right: 3px solid #000; }
.hscroll button { width: 26px; display: grid; place-items: center; }
.hscroll .thumb { width: 47%; background: #cdcdcd; }
.vscroll { display: flex; flex-direction: column; width: 26px; border-top: 3px solid #000; flex: none; background: #f0f0f0; }
.vscroll button { height: 27px; display: grid; place-items: center; }
.vscroll button:last-child { height: 52px; padding-bottom: 26px; }
.vscroll .track { flex: 1; }
.vscroll .thumb { height: 49%; background: #cdcdcd; margin: 0 1px; }
.hscroll svg, .vscroll svg, .cond-scroll svg { width: 12px; height: 8px; stroke: #555; stroke-width: 3; }
.rot-u { transform: rotate(180deg); }
.rot-l { transform: rotate(90deg); }
.rot-r { transform: rotate(-90deg); }
.splitter { width: 7px; border-right: 1px solid #999; display: grid; place-items: center; flex: none; }
.splitter svg { width: 4px; height: 34px; fill: #555; }
.sidebar { width: 38px; margin-right: 1px; border-right: 1px solid #999; display: flex; flex-direction: column; align-items: center; gap: 3px; padding-top: 2px; flex: none; }
.sidebar button { width: 31px; height: 32px; border-radius: 3px; display: grid; place-items: center; }
.sidebar svg { width: 23px; height: 23px; }
.sidebar .side-menu { height: 36px; }
.sidebar .side-menu svg { width: 12px; height: 12px; }
.sidebar .on { border: 1px solid #999; background: #e9e9e9; }

.status { display: grid; grid-template-columns: 498px 485px 57px 73px 21px 32px 1fr 156px 67px; height: 33px; padding: 5px 0 2px; background: #f0f0f0; border-top: 1px solid #ddd; flex: none; }
.status span { border-right: 1px solid #999; }

.dialog { position: absolute; left: 784px; top: 185px; width: 813px; background: #f0f0f0; border: 1px solid #2a78b8; box-shadow: 0 2px 14px rgba(0, 30, 70, .4); }
.dlg-head { display: flex; justify-content: space-between; align-items: center; height: 36px; padding: 0 17px 0 3px; background: #fff; }
.dlg-head h1 { margin: 0; padding-top: 1px; font: inherit; }
.dlg-head svg { width: 16px; height: 16px; stroke: #111; }
.dlg-body input:not([type]) { height: 38px; padding-left: 3px; background: #fff; border: 1px solid #aaa; }
.params { display: grid; grid-template-columns: 215px 215px 243px 52px; grid-template-rows: 45px 45px 44px 48px 50px; align-items: end; padding: 17px 0 0 21px; }
.params > label:not(.radio) { padding-bottom: 10px; }
.params > input { margin-bottom: 5px; }
.params .wide { grid-column: 2 / 4; }
.params .pick { justify-self: end; }
.result { align-self: start; padding-top: 14px; }
.params .radio { grid-column: 2; display: flex; align-items: center; gap: 4px; align-self: start; padding-top: 8px; }
.radio input { appearance: none; width: 13px; height: 13px; border: 1px solid #333; border-radius: 50%; background: #fff; }
.radio input:checked { background: radial-gradient(#222 0 3px, #fff 4px); }
.pick { width: 44px; height: 45px; background: #e1e1e1; border: 1px solid #adadad; display: grid; place-items: center; flex: none; }
.pick svg { width: 16px; height: 16px; }
fieldset { margin: 28px 11px 0 21px; padding: 0; border: 0; }
legend { display: flex; width: 100%; align-items: center; gap: 4px; padding: 0; }
legend::after { content: ""; flex: 1; height: 1px; background: #999; }
.cond-head { display: grid; grid-template-columns: 254px 155px 1fr; padding: 20px 0 9px 21px; }
.conds { display: flex; padding-left: 21px; gap: 16px; }
.cond-rows { display: grid; gap: 2px; }
.cond { display: flex; gap: 8px; align-items: center; }
.cond > input { width: 187px; }
.cond .remove { margin-left: 4px; }
.select { position: relative; align-self: start; margin: 2px 14px 0 7px; width: 133px; height: 33px; }
.select select { appearance: none; width: 100%; height: 33px; padding: 2px 0 0 5px; background: #fff; border: 1px solid #888; }
.select i { position: absolute; right: 2px; top: 2px; width: 27px; height: 29px; background: #e1e1e1; border: 1px solid #aaa; display: grid; place-items: center; pointer-events: none; }
.select svg { width: 12px; height: 8px; stroke: #555; }
.cond-scroll { display: flex; flex-direction: column; width: 26px; border-left: 1px solid #fff; }
.cond-scroll button { height: 28px; display: grid; place-items: center; }
.cond-scroll .track { flex: 1; padding-top: 13px; }
.cond-scroll .thumb { height: 56px; background: #cdcdcd; }
.actions { display: flex; justify-content: space-between; margin-top: 31px; padding: 23px 23px 19px 22px; border-top: 1px solid #a5a5a5; box-shadow: inset 0 1px #fff; }
.actions button { width: 174px; height: 42px; padding-top: 1px; background: #e1e1e1; border: 1px solid #adadad; }
.actions .default { border: 2px solid #0a6fb8; }
.default span { outline: 1px dotted #000; padding: 1px 0; }

.taskbar { display: flex; height: 60px; background: #0c1923; color: #fff; flex: none; padding-right: 5px; }
.taskbar button { display: grid; place-items: center; }
.sys { width: 72px; }
.sys svg { width: 24px; height: 24px; stroke: #fff; stroke-width: 1; }
.sys:first-child svg { stroke: none; }
.tsep { width: 4px; height: 44px; margin: 8px 17px 0 10px; border: solid #46535c; border-width: 0 1px; }
.apps { display: flex; flex: 1; gap: 2px; }
.apps button { width: 73px; }
.apps svg { width: 36px; height: 36px; }
.ya { font: bold 30px "Liberation Serif", serif; fill: #e02020; }
.run { background: linear-gradient(#7db4e6, #7db4e6) bottom / 61px 3px no-repeat; }
.current { background: linear-gradient(#7db4e6, #7db4e6) bottom / 100% 3px no-repeat, linear-gradient(90deg, #3b464e 91%, #2a343c 91%); }
.tray { display: flex; align-items: center; border-right: 1px solid #56616a; }
.tray button { width: 36px; }
.tray svg { stroke: #fff; stroke-width: 1; width: 24px; height: 24px; }
.tray .help-ic { margin-right: 31px; }
.help-ic svg { width: 36px; height: 36px; stroke: none; }
.tray .people { width: 24px; margin-right: 23px; }
.people svg { stroke-width: 2; }
.lang { width: 54px; text-align: center; }
.clock { display: grid; width: 108px; text-align: center; line-height: 27px; }
.tray .notif { position: relative; width: 74px; height: 60px; }
.notif svg { height: 28px; margin-right: 12px; }
.notif b { position: absolute; left: 31px; top: 29px; width: 24px; height: 26px; border: 1px solid #999; border-radius: 50%; background: #2b333b; font: 600 16px/24px "Open Sans", sans-serif; }
```
